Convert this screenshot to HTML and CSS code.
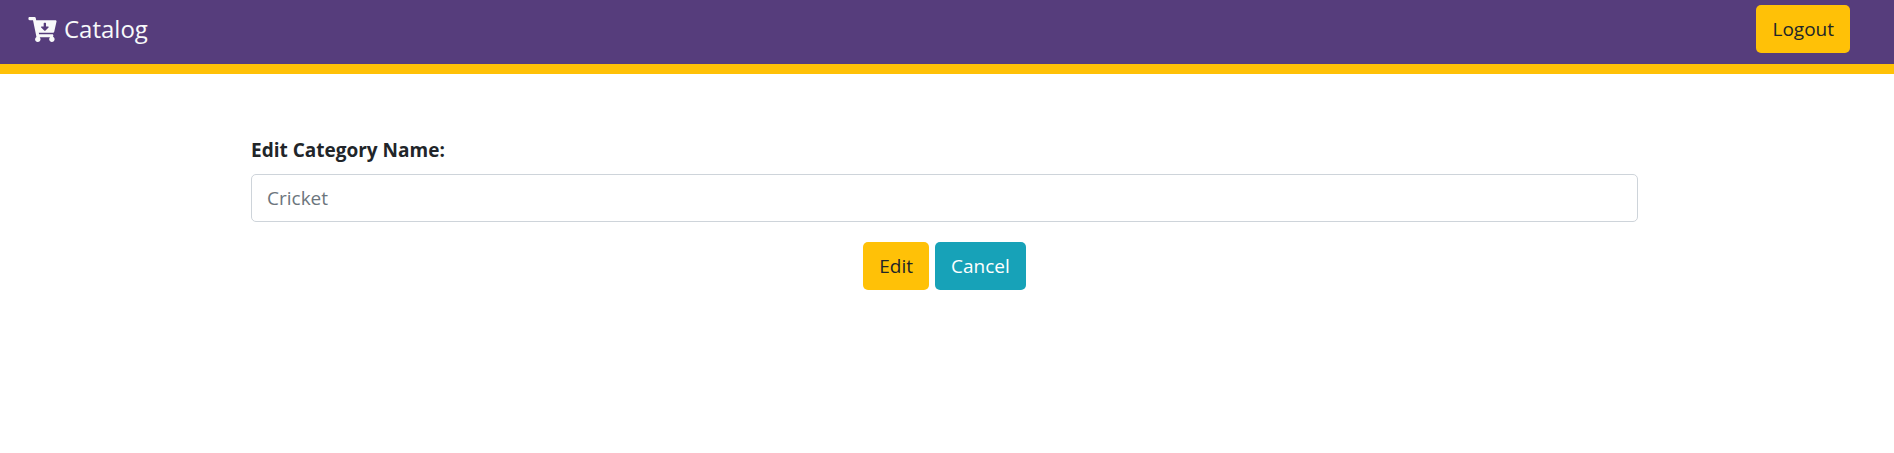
FILE: index.html
```html
<!DOCTYPE html>
<html lang="en">
<head>
<meta charset="utf-8">
<meta name="viewport" content="width=device-width, initial-scale=1">
<title>Catalog</title>
<link rel="stylesheet" href="styles.css">
</head>
<body>
<header class="navbar">
  <a class="brand" href="#">
    <svg class="brand-icon" viewBox="0 0 576 512" aria-hidden="true"><path fill="currentColor" d="M504.717 320H211.572l6.545 32h268.418c15.401 0 26.816 14.301 23.403 29.319l-5.517 24.276C523.112 414.668 536 433.828 536 456c0 31.202-25.519 56.444-56.824 55.994-29.823-.429-54.35-24.631-55.155-54.447-.44-16.287 6.085-31.049 16.803-41.548H231.176C241.553 426.165 248 440.326 248 456c0 31.813-26.528 57.431-58.67 55.938-28.54-1.325-51.751-24.385-53.251-52.917-1.158-22.034 10.436-41.455 28.051-51.586L93.883 64H24C10.745 64 0 53.255 0 40V24C0 10.745 10.745 0 24 0h102.529c11.401 0 21.228 8.021 23.513 19.19L159.208 64H551.99c15.401 0 26.816 14.301 23.403 29.319l-47.273 208C525.637 312.246 515.923 320 504.717 320zM403.029 192H360v-60c0-6.627-5.373-12-12-12h-24c-6.627 0-12 5.373-12 12v60h-43.029c-10.691 0-16.045 12.926-8.485 20.485l67.029 67.029c4.686 4.686 12.284 4.686 16.971 0l67.029-67.029c7.559-7.559 2.205-20.485-8.486-20.485z"/></svg>
    <span>Catalog</span>
  </a>
  <button class="btn btn-warning" type="button">Logout</button>
</header>
<main class="page">
  <form class="container">
    <label class="label" for="category">Edit Category Name:</label>
    <input class="field" id="category" type="text" placeholder="Cricket">
    <div class="actions">
      <button class="btn btn-warning" type="button">Edit</button>
      <button class="btn btn-info" type="button">Cancel</button>
    </div>
  </form>
</main>
</body>
</html>
```
FILE: styles.css
```css
* {
  box-sizing: border-box;
}

body {
  margin: 0;
  background: #fff;
  color: #212529;
  font-family: "Segoe UI", "Open Sans", "Noto Sans", sans-serif;
  font-size: 19px;
  line-height: 30px;
}

.navbar {
  display: flex;
  align-items: center;
  justify-content: space-between;
  padding: 5px 44px 11px 28px;
  background: #563d7c;
  border-bottom: 10px solid #ffc107;
}

.brand {
  display: flex;
  align-items: center;
  gap: 7px;
  color: #f8f9fa;
  font-size: 24px;
  text-decoration: none;
}

.brand-icon {
  width: 29px;
  height: 25px;
}

.btn {
  padding: 8px 15px;
  border: 1px solid transparent;
  border-radius: 5px;
  font: inherit;
  cursor: pointer;
}

.btn-warning {
  background: #ffc107;
  color: #212529;
}

.btn-info {
  background: #17a2b8;
  color: #fff;
}

.page {
  padding: 61px 5px 0 0;
}

.container {
  max-width: 1425px;
  margin: 0 auto;
  padding: 0 19px;
}

.label {
  display: block;
  margin-bottom: 9px;
  font-weight: 700;
}

.field {
  display: block;
  width: 100%;
  padding: 8px 15px;
  border: 1px solid #ced4da;
  border-radius: 5px;
  background: #fff;
  color: #495057;
  font: inherit;
}

.field::placeholder {
  color: #6c757d;
  opacity: 1;
}

.actions {
  display: flex;
  justify-content: center;
  gap: 6px;
  margin-top: 20px;
}
```
